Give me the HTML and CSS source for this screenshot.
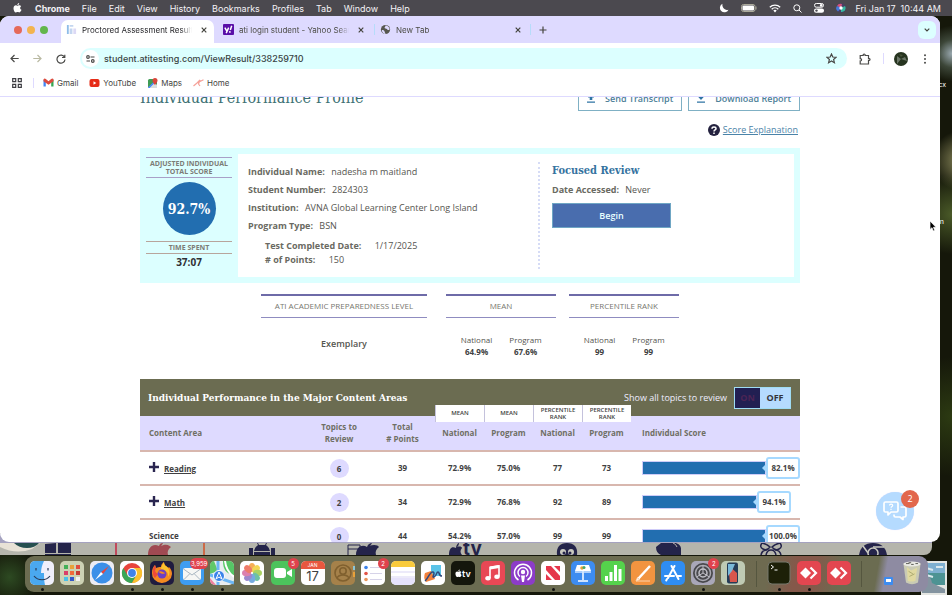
FILE: index.html
```html
<!DOCTYPE html>
<html lang="en">
<head>
    <meta charset="UTF-8">
    <meta name="viewport" content="width=device-width, initial-scale=1.0">
    <title>Proctored Assessment Results</title>
    <link rel="stylesheet" href="styles.css">
</head>
<body>
    <header class="menubar">
        <svg class="apple" viewBox="0 0 16 18"><path d="M11 0c.2 1.800-1.400 3.800-3.200 3.800C7.500 2 9.200.200 11 0zM8 5c.8 0 1.700-.9 3.400-.9 1.300 0 2.500.7 3.200 1.700-2.700 1.600-2.300 5.300.6 6.500C14.400 14.500 12.900 17 11.300 17c-1.200 0-1.600-.7-3.100-.7s-2 .7-3.100.7C2.900 17 .800 12.800.800 9.700.800 6.200 3 4.200 5.100 4.200 6.400 4.200 7.200 5 8 5z" fill="#fff"/></svg>
        <nav class="menus">
            <button class="app-name">Chrome</button>
            <button>File</button>
            <button>Edit</button>
            <button>View</button>
            <button>History</button>
            <button>Bookmarks</button>
            <button>Profiles</button>
            <button>Tab</button>
            <button>Window</button>
            <button>Help</button>
        </nav>
        <div class="status">
            <svg width="10" height="10" viewBox="0 0 10 10"><path d="M3.500.800a4.500 4.500 0 1 0 6 6A5 5 0 0 1 3.500.800z" fill="#fff"/></svg>
            <svg class="battery" width="16" height="8" viewBox="0 0 16 8"><rect x=".5" y=".5" width="13.500" height="7" rx="2" fill="none" stroke="#aaa99a"/><rect x="1.500" y="1.500" width="11.500" height="5" rx="1" fill="#fff"/><path d="M15 2.500v3" stroke="#aaa99a"/></svg>
            <svg width="12" height="9" viewBox="0 0 12 9"><g fill="none" stroke="#fff" stroke-width="1.300"><path d="M.8 3.200a7.400 7.400 0 0 1 10.400 0M2.700 5.200a4.700 4.700 0 0 1 6.600 0"/></g><path d="M4.300 6.600a2.500 2.500 0 0 1 3.400 0L6 8.500z" fill="#fff"/></svg>
            <svg width="9" height="9" viewBox="0 0 9 9"><g fill="none" stroke="#fff"><circle cx="3.800" cy="3.800" r="3"/><path d="M6 6l2.500 2.500"/></g></svg>
            <svg width="10" height="10" viewBox="0 0 10 10"><rect x=".5" y=".5" width="9" height="3.700" rx="1.800" fill="none" stroke="#fff"/><circle cx="7.200" cy="2.400" r="1.300" fill="#fff"/><rect y="5.500" width="10" height="4.300" rx="2.100" fill="#fff"/><circle cx="2.500" cy="7.600" r="1.200" fill="#4b494f"/></svg>
            <svg class="siri" width="10" height="10" viewBox="0 0 10 10"><circle cx="5" cy="5" r="4.700" fill="#4a3f66"/><path d="M5 5L1 3a4 4 0 0 1 5-2z" fill="#d5527c"/><path d="M5 5L2 8.500A4 4 0 0 1 1 3z" fill="#4679d8"/><path d="M5 5l4-2a4 4 0 0 1-4 6z" fill="#37b8a0"/><circle cx="5" cy="5" r="1.700" fill="#fff"/></svg>
            <span class="clock"><span>Fri Jan 17</span><span>10:44 AM</span></span>
        </div>
    </header>

    <main class="browser">
        <div class="tabstrip">
            <div class="lights"><i class="red"></i><i class="yellow"></i><i class="green"></i></div>
            <div class="tab active">
                <svg class="fav" viewBox="0 0 12 12"><path d="M1 1h2v10H1z" fill="#8fbde8"/><path d="M4 1h4v2H4zM4 5h3v6H4z" fill="#c4d6f0"/><path d="M8 5h3v6H8z" fill="#dcd9f5"/></svg>
                <span class="tab-title">Proctored Assessment Results</span>
                <button class="close" aria-label="Close tab"><svg viewBox="0 0 6 6"><path d="M.7.7l4.600 4.600M5.300.7L.7 5.300"/></svg></button>
            </div>
            <div class="tab">
                <svg class="fav" viewBox="0 0 12 12"><rect width="12" height="12" rx="1" fill="#5a0fa8"/><path d="M2 4l2 3.500M6.200 4L3.500 10" stroke="#fff" stroke-width="1.600" fill="none"/><path d="M9.500 2L8 6.500" stroke="#fff" stroke-width="1.600"/><circle cx="7.500" cy="8.600" r="1" fill="#fff"/></svg>
                <span class="tab-title">ati login student - Yahoo Search</span>
                <button class="close" aria-label="Close tab"><svg viewBox="0 0 6 6"><path d="M.7.7l4.600 4.600M5.300.7L.7 5.300"/></svg></button>
            </div>
            <div class="tab divided">
                <svg class="fav" viewBox="0 0 12 12"><circle cx="6" cy="6" r="5" fill="#57574f"/><path d="M2 6.500c2 0 3 .5 3 2 0 1 1 1 1 2.300C3.500 10.800 2 9 2 6.500zM6 1.500c0 1.500-1 1.500-1 2.500s2 .5 2.500 1.500S9 7 10.500 6C10.500 3.500 8.500 1.500 6 1.500z" fill="#dedaff"/></svg>
                <span class="tab-title">New Tab</span>
                <button class="close" aria-label="Close tab"><svg viewBox="0 0 6 6"><path d="M.7.7l4.600 4.600M5.300.7L.7 5.300"/></svg></button>
            </div>
            <button class="new-tab" aria-label="New tab"><svg width="8" height="8" viewBox="0 0 8 8"><path d="M4 .500v7M.500 4h7"/></svg></button>
            <button class="tab-search" aria-label="Search tabs"><svg width="6" height="4" viewBox="0 0 6 4"><path d="M.700.700L3 3 5.300.700"/></svg></button>
        </div>

        <div class="toolbar">
            <button aria-label="Back"><svg width="9" height="9" viewBox="0 0 9 9"><path d="M8.700 4.500H1M4.500 1L1 4.500 4.500 8"/></svg></button>
            <button class="dim" aria-label="Forward"><svg width="9" height="9" viewBox="0 0 9 9"><path d="M.300 4.500H8M4.500 1L8 4.500 4.500 8"/></svg></button>
            <button aria-label="Reload"><svg width="10" height="10" viewBox="0 0 10 10"><path d="M8.500 3.200A4 4 0 1 0 9 5.500M8.800.800v2.700H6"/></svg></button>
            <div class="omnibox">
                <span class="site-info"><svg width="9" height="8" viewBox="0 0 9 8"><circle cx="2" cy="2" r="1.300"/><path d="M4.500 2h4M.500 6H4"/><circle cx="6.800" cy="6" r="1.300"/></svg></span>
                <input type="text" aria-label="Address" value="student.atitesting.com/ViewResult/338259710">
                <button aria-label="Bookmark this page"><svg width="11" height="11" viewBox="0 0 11 11"><path d="M5.500 1l1.300 3 3.300.3-2.500 2.200.8 3.200-2.900-1.700-2.900 1.700.8-3.200L.9 4.300 4.200 4z"/></svg></button>
            </div>
            <button class="extensions" aria-label="Extensions"><svg width="12" height="12" viewBox="0 0 12 12"><path d="M1.200 2.500h3c-.4-2 2.300-2 1.900 0h3.400v3c2-.4 2 2.300 0 1.900V11H1.200V8c1.800.2 1.800-2.500 0-2.300z"/></svg></button>
            <span class="tool-sep"></span>
            <button class="avatar" aria-label="Profile"><svg width="14" height="14" viewBox="0 0 14 14"><circle cx="7" cy="7" r="7" fill="#26341f" stroke="none"/><path d="M3 4l4 3 4-2 2 4-6-2-4 5z" fill="#6b7668" stroke="none"/><path d="M5 2l4 1-2 2z" fill="#465239" stroke="none"/></svg></button>
            <button class="kebab" aria-label="Menu"><svg width="4" height="10" viewBox="0 0 4 10"><g fill="#4a4a48" stroke="none"><circle cx="2" cy="1.300" r="1"/><circle cx="2" cy="5" r="1"/><circle cx="2" cy="8.700" r="1"/></g></svg></button>
        </div>

        <nav class="bookmarks">
            <button aria-label="Apps"><svg width="10" height="10" viewBox="0 0 10 10"><g fill="none" stroke="#3d3d42" stroke-width="1.200"><path d="M.7.7h3v3h-3zM6.300.7h3v3h-3zM.7 6.300h3v3h-3zM6.300 6.300h3v3h-3z"/></g></svg></button>
            <a class="first" href="#"><svg width="11" height="9" viewBox="0 0 11 9"><path d="M.5 1.500V8.500H2.800V4z" fill="#4285f4"/><path d="M10.500 1.500V8.500H8.200V4z" fill="#34a853"/><path d="M.5 1.500v1.700l5 3.600 5-3.600V1.200C10 .200 9 .200 8.200 1L5.500 3.200 2.800 1C2 .2 1 .3.500 1.500z" fill="#dd4b3e"/></svg>Gmail</a>
            <a href="#"><svg width="11" height="8" viewBox="0 0 11 8"><rect x=".5" width="10" height="8" rx="2" fill="#e62c17"/><path d="M4.500 2.300v3.400L7.300 4z" fill="#fff"/></svg>YouTube</a>
            <a href="#"><svg width="11" height="10" viewBox="0 0 11 10"><rect x="1" y="1" width="9" height="9" rx="1.500" fill="#3f9b54"/><path d="M1 9.500L7 4l3 3v3H1z" fill="#d9dede"/><path d="M1.500 10L8 3.500" stroke="#4285f4" stroke-width="1.500"/><path d="M8 0a2.500 2.500 0 0 1 2.500 2.500C10.500 4.500 8 7 8 7S5.500 4.500 5.500 2.500A2.500 2.500 0 0 1 8 0z" fill="#d9463a"/></svg>Maps</a>
            <a href="#"><svg width="11" height="8" viewBox="0 0 11 8"><path d="M.5 7L4 4l3-3-1.500 4 1.500 2M5 3.500L10.500.8" fill="none" stroke="#f5a199" stroke-width="1.200"/></svg>Home</a>
        </nav>

        <section class="page">
            <div class="report">
                <div class="page-head">
                    <h1>Individual Performance Profile</h1>
                    <button class="outline"><svg width="8" height="9" viewBox="0 0 8 9"><path d="M2.700 6V3.500H.8L4 0l3.200 3.500H5.300V6zM0 7.500h8v1.200H0z"/></svg>Send Transcript</button>
                    <button class="outline"><svg width="8" height="9" viewBox="0 0 8 9"><path d="M2.700 0v2.500H.8L4 6l3.200-3.500H5.300V0zM0 7.500h8v1.200H0z"/></svg>Download Report</button>
                </div>
                <div class="explain">
                    <svg width="12" height="12" viewBox="0 0 12 12"><circle cx="6" cy="6" r="6" fill="#24223f"/><path d="M4 4.700C4 2.400 8 2.400 8 4.700 8 6 6 6 6 7.500M6 8.500V10" stroke="#fff" stroke-width="1.500" fill="none"/></svg>
                    <a href="#">Score Explanation</a>
                </div>

                <div class="summary">
                    <div class="score">
                        <h2>Adjusted Individual<br>Total Score</h2>
                        <div class="circle">92.7%</div>
                        <h2 class="warm">Time Spent</h2>
                        <strong>37:07</strong>
                    </div>
                    <div class="details">
                        <div class="person">
                            <p><b>Individual Name:</b> nadesha m maitland</p>
                            <p><b>Student Number:</b> 2824303</p>
                            <p><b>Institution:</b> AVNA Global Learning Center Long Island</p>
                            <p><b>Program Type:</b> BSN</p>
                            <div class="sub">
                                <p><b>Test Completed Date:</b> 1/17/2025</p>
                                <p><b># of Points:</b> 150</p>
                            </div>
                        </div>
                        <div class="review">
                            <h3>Focused Review</h3>
                            <p><b>Date Accessed:</b> Never</p>
                            <button class="begin">Begin</button>
                        </div>
                    </div>
                </div>

                <div class="levels">
                    <div class="level wide">
                        <h4>ATI ACADEMIC PREPAREDNESS LEVEL</h4>
                        <p class="grade">Exemplary</p>
                    </div>
                    <div class="level">
                        <h4>MEAN</h4>
                        <div class="pair"><p>National<b>64.9%</b></p><p>Program<b>67.6%</b></p></div>
                    </div>
                    <div class="level rank">
                        <h4>PERCENTILE RANK</h4>
                        <div class="pair"><p>National<b>99</b></p><p>Program<b>99</b></p></div>
                    </div>
                </div>

                <div class="areas-head">
                    <h2>Individual Performance in the Major Content Areas</h2>
                    <span class="toggle-label" id="topics-label">Show all topics to review</span>
                    <div class="toggle" role="group" aria-labelledby="topics-label">
                        <button class="on">ON</button><button class="off">OFF</button>
                    </div>
                </div>
                <table class="areas">
                    <colgroup>
                        <col><col class="c-topics"><col class="c-total"><col class="c-num"><col class="c-num"><col class="c-num"><col class="c-num"><col class="c-score">
                    </colgroup>
                    <thead>
                        <tr>
                            <th class="name">Content Area</th>
                            <th>Topics to<br>Review</th>
                            <th>Total<br># Points</th>
                            <th><span class="flag">MEAN</span>National</th>
                            <th><span class="flag">MEAN</span>Program</th>
                            <th><span class="flag">PERCENTILE<br>RANK</span>National</th>
                            <th><span class="flag">PERCENTILE<br>RANK</span>Program</th>
                            <th class="score-col">Individual Score</th>
                        </tr>
                    </thead>
                    <tbody>
                        <tr>
                            <td class="name"><button class="plus" aria-label="Expand Reading"><svg width="10" height="10" viewBox="0 0 10 10"><path d="M3.800 0h2.400v3.800H10v2.400H6.200V10H3.800V6.200H0V3.800h3.800z"/></svg></button><a href="#">Reading</a></td>
                            <td><span class="bubble">6</span></td>
                            <td>39</td>
                            <td>72.9%</td>
                            <td>75.0%</td>
                            <td>77</td>
                            <td>73</td>
                            <td class="score-col"><div class="bar-row"><span class="bar"></span><span class="bar-value">82.1%</span></div></td>
                        </tr>
                        <tr>
                            <td class="name"><button class="plus" aria-label="Expand Math"><svg width="10" height="10" viewBox="0 0 10 10"><path d="M3.800 0h2.400v3.800H10v2.400H6.200V10H3.800V6.200H0V3.800h3.800z"/></svg></button><a href="#">Math</a></td>
                            <td><span class="bubble">2</span></td>
                            <td>34</td>
                            <td>72.9%</td>
                            <td>76.8%</td>
                            <td>92</td>
                            <td>89</td>
                            <td class="score-col"><div class="bar-row short"><span class="bar"></span><span class="bar-value">94.1%</span></div></td>
                        </tr>
                        <tr>
                            <td class="name">Science</td>
                            <td><span class="bubble">0</span></td>
                            <td>44</td>
                            <td>54.2%</td>
                            <td>57.0%</td>
                            <td>99</td>
                            <td>99</td>
                            <td class="score-col"><div class="bar-row"><span class="bar"></span><span class="bar-value">100.0%</span></div></td>
                        </tr>
                    </tbody>
                </table>
            </div>
            <button class="chat" aria-label="Chat">
                <svg width="24" height="20" viewBox="0 0 24 20"><g fill="none" stroke="#fff" stroke-width="1.700" stroke-linejoin="round"><path d="M2.500 1h11Q15 1 15 2.500v7Q15 11 13.500 11H8l-3 3v-3H2.500Q1 11 1 9.500v-7Q1 1 2.500 1z"/><path d="M17.500 6h4Q23 6 23 7.500v7q0 1.500-1.500 1.500H20v2.500L17 16h-4.500Q11 16 11 14.500v-1"/><path d="M6.500 4.500c0-1.800 3.200-1.800 3.200 0 0 1-1.600 1-1.600 2.300M8 7.800V9" stroke-width="1.200"/></g></svg>
                <span class="count">2</span>
            </button>
        </section>
    </main>

    <!-- window sitting behind the browser -->
    <div class="behind">
        <svg class="orb" width="40" height="12" viewBox="0 0 40 12"><path d="M0 0h40L32 6Q16 12 0 4z" fill="#e8e2d6"/><path d="M14 0h25q-4 5-12 5T14 0z" fill="#264f50"/></svg>
        <span class="cell"><svg width="26" height="12" viewBox="0 0 26 12"><path d="M0 1l11-1v10H0zM13 0h13v10H13zM0 11h26v1H0z"/></svg></span>
        <span class="cell ruled"><svg width="24" height="12" viewBox="0 0 24 12"><path d="M0 12C0 4 5 0 11 3c1-3 3-3 4-3-1 2-2 3-2 3 6-3 9 0 10 1-3 2-4 5-3 8z" fill="#a04a52"/></svg></span>
        <span class="cell"><svg width="26" height="12" viewBox="0 0 26 12"><path d="M5 8C6 4 8 3 9 2L8 0h1l1 2h6l1-2h1l-1 2c1 1 3 2 4 6zM5 9h16v3H5zM0 5h4v7H0zM22 5h4v7h-4z"/></svg></span>
        <span class="cell"><svg width="34" height="12" viewBox="0 0 34 12"><path d="M1 2h12M1 2v10M1 6h10M13 2v4" fill="none" stroke="#24244a"/><path d="M9 12c0-8 6-11 11-8 1-3 3-4 5-4-1 2-2 3-3 3 5-2 9-1 10 1-3 2-4 5-3 8z"/></svg></span>
        <span class="cell tv"><svg width="14" height="12" viewBox="0 0 14 12"><path d="M0 12C0 5 3 3 7 5c0-3 2-5 3-5 0 2-1 3-2 4 3-1 5 0 5 1-2 2-2 5 0 7z"/></svg>tv</span>
        <span class="cell"><svg width="22" height="12" viewBox="0 0 22 12"><path d="M1 12C0 4 4 0 11 0s11 4 10 12z"/><circle cx="7" cy="9" r="3" fill="#c9c9c0"/><circle cx="15" cy="9" r="3" fill="#c9c9c0"/><circle cx="8" cy="10" r="1.500"/><circle cx="14" cy="10" r="1.500"/></svg></span>
        <span class="cell"><svg width="26" height="12" viewBox="0 0 26 12"><path d="M0 4l5-4h15q6 2 5 8v4H5Q0 10 0 4z"/><path d="M17 0q3 1 4 4" stroke="#b5b5ac" fill="none"/></svg></span>
        <span class="cell"><svg width="22" height="12" viewBox="0 0 22 12"><g fill="none" stroke="#24244a" stroke-width="1.500"><path d="M2 0q5 1 8 4Q7 8 3 6T2 0zM20 0q-5 1-8 4 3 4 7 2t1-6zM1 12q1-5 6-5M21 12q-1-5-6-5M6 12q1-5 5-5t5 5"/></g></svg></span>
        <span class="cell"><svg width="28" height="12" viewBox="0 0 28 12"><path d="M0 12Q2 0 14 0t14 12z"/><circle cx="14" cy="10" r="5" fill="none" stroke="#c9c9c0" stroke-width="1.500"/><path d="M14 4h11M9 10L4 3" stroke="#c9c9c0" stroke-width="1.500"/></svg></span>
    </div>

    <footer class="dock">
        <span class="app running"><svg viewBox="0 0 24 24"><rect width="24" height="24" rx="5" fill="#f0effb"/><path d="M5 0h9c-2 4-3 8-3 12h3c0 4 0 8 1 12H5a5 5 0 0 1-5-5V5a5 5 0 0 1 5-5z" fill="#4aa8f0"/><g fill="none" stroke="#2a3a55" stroke-width="1.200"><path d="M6 7v2.500M18 7v2.500M4 15c4 5 12 5 16 0"/></g></svg></span>
        <span class="app"><svg viewBox="0 0 24 24"><rect width="24" height="24" rx="5" fill="#cdd2b4"/><g><path d="M4 4h4v4H4z" fill="#44b058"/><path d="M10 4h4v4h-4z" fill="#e8a13a"/><path d="M16 4h4v4h-4z" fill="#e04c40"/><path d="M4 10h4v4H4z" fill="#d93f6a"/><path d="M10 10h4v4h-4z" fill="#f06a3a"/><path d="M16 10h4v4h-4z" fill="#c63b33"/><path d="M4 16h4v4H4z" fill="#4ac0e8"/><path d="M10 16h4v4h-4z" fill="#3458c8"/><path d="M16 16h4v4h-4z" fill="#f4f4f4"/></g></svg></span>
        <span class="app"><svg viewBox="0 0 24 24"><rect width="24" height="24" rx="5" fill="#ececf4"/><circle cx="12" cy="12" r="10.500" fill="#3b8fe8"/><path d="M19 5l-6 8-2-2z" fill="#e8453c"/><path d="M5 19l6-8 2 2z" fill="#fff"/></svg></span>
        <span class="app running"><svg viewBox="0 0 24 24"><rect width="24" height="24" rx="5" fill="#fff"/><circle cx="12" cy="12" r="10" fill="#e8453c"/><path d="M3.300 7A10 10 0 0 0 12 22l4.300-7.500H7.700z" fill="#3aa757"/><path d="M20.700 7A10 10 0 0 1 12 22l4.300-7.500L12 7z" fill="#f9c12e"/><circle cx="12" cy="12" r="5" fill="#fff"/><circle cx="12" cy="12" r="3.900" fill="#3f83ea"/></svg></span>
        <span class="app running"><svg viewBox="0 0 24 24"><rect width="24" height="24" rx="5" fill="#1f1b3f"/><path d="M2 12C2 8 3 6 5 4l1 3c2-1 3-1 5-1 0-3 2-4 3-5 0 4 3 4 4 6l1-1c2 2 3 4 3 7a10 9.500 0 0 1-20-1z" fill="#f48a22"/><path d="M5 4l1 3c-2 3 0 5 2 6l-3 4C2 14 2 8 5 4z" fill="#ef4a3a"/><path d="M14 1c0 4 3 4 4 6 2 3 2 6 0 9 1-5-3-7-7-8 0-3 2-5 3-7z" fill="#fbc02d"/><circle cx="12" cy="13" r="4.500" fill="#6b3fc4"/><path d="M8 11c3-2 5 0 7 1-2 2-4 0-7-1z" fill="#f48a22"/></svg></span>
        <span class="app running"><svg viewBox="0 0 24 24"><rect width="24" height="24" rx="5" fill="#3e9df2"/><rect x="3" y="7" width="18" height="12" rx="2" fill="#f6f6f4"/><path d="M3.500 8l8.500 6 8.500-6M4 18.500l6-6M20 18.500l-6-6" fill="none" stroke="#a9b6c2"/></svg><span class="badge wide-badge">3,959</span></span>
        <span class="app running"><svg viewBox="0 0 24 24"><rect width="24" height="24" rx="5" fill="#e9edf0"/><path d="M13 0h6a5 5 0 0 1 5 5v9C16 13 13 8 13 0z" fill="#56c766"/><path d="M0 5a5 5 0 0 1 4-5l4 10-8 3z" fill="#60c86a"/><path d="M8 0v24M0 14l24 8" stroke="#6bb6f5" stroke-width="3"/><path d="M15 0q1 10 9 16" fill="none" stroke="#fff" stroke-width="2"/><path d="M0 17l6 7H5a5 5 0 0 1-5-5z" fill="#ef7e9e"/><circle cx="9" cy="15" r="5.500" fill="#3a83ea" stroke="#fff"/><path d="M9 11l3 7-3-2-3 2z" fill="none" stroke="#fff"/></svg></span>
        <span class="app"><svg viewBox="0 0 24 24"><rect width="24" height="24" rx="5" fill="#fff"/><g opacity=".85"><ellipse cx="12" cy="6.500" rx="3.200" ry="4.500" fill="#f5a13a"/><ellipse cx="12" cy="6.500" rx="3.200" ry="4.500" fill="#f1cf38" transform="rotate(45 12 12)"/><ellipse cx="12" cy="6.500" rx="3.200" ry="4.500" fill="#9ccb4a" transform="rotate(90 12 12)"/><ellipse cx="12" cy="6.500" rx="3.200" ry="4.500" fill="#55b894" transform="rotate(135 12 12)"/><ellipse cx="12" cy="6.500" rx="3.200" ry="4.500" fill="#5f9ddb" transform="rotate(180 12 12)"/><ellipse cx="12" cy="6.500" rx="3.200" ry="4.500" fill="#8c74c4" transform="rotate(225 12 12)"/><ellipse cx="12" cy="6.500" rx="3.200" ry="4.500" fill="#d66aa0" transform="rotate(270 12 12)"/><ellipse cx="12" cy="6.500" rx="3.200" ry="4.500" fill="#ec6450" transform="rotate(315 12 12)"/></g></svg></span>
        <span class="app"><svg viewBox="0 0 24 24"><rect width="24" height="24" rx="5" fill="#4cc35c"/><rect x="3" y="7" width="12" height="10" rx="3" fill="#fff"/><path d="M16 11l5-3v8l-5-3z" fill="#fff"/></svg><span class="badge">5</span></span>
        <span class="app calendar"><span>JAN</span><b>17</b></span>
        <span class="app"><svg viewBox="0 0 24 24"><rect width="24" height="24" rx="5" fill="#a5814a"/><path d="M23 5v4" stroke="#8cc6d8" stroke-width="2"/><path d="M23 11v5" stroke="#e8a13a" stroke-width="2"/><g fill="none" stroke="#80602f" stroke-width="1.600"><circle cx="12" cy="12" r="8"/><circle cx="12" cy="10" r="3.200"/><path d="M6 17c2-4 10-4 12 0"/></g></svg></span>
        <span class="app"><svg viewBox="0 0 24 24"><rect width="24" height="24" rx="5" fill="#fff"/><circle cx="5" cy="6.500" r="1.800" fill="#3b83ea"/><circle cx="5" cy="12.500" r="1.800" fill="#e25548"/><circle cx="5" cy="18.500" r="1.800" fill="#e8955a"/><path d="M9 6.500h12M9 12.500h12M9 18.500h12" stroke="#d6d3e8"/></svg><span class="badge">2</span></span>
        <span class="app"><svg viewBox="0 0 24 24"><rect width="24" height="24" rx="5" fill="#fff"/><path d="M0 6V5a5 5 0 0 1 5-5h14a5 5 0 0 1 5 5v1z" fill="#f9cb3c"/><path d="M0 11h24M0 16h24" stroke="#d9d5f4"/><path d="M0 17h24v2a5 5 0 0 1-5 5H5a5 5 0 0 1-5-5z" fill="#e6e2fb"/></svg></span>
        <span class="app"><svg viewBox="0 0 24 24"><rect width="24" height="24" rx="5" fill="#fff"/><path d="M10 4h10v11H10z" fill="#5bc4e8"/><path d="M4 12l6-2 4 8-9 3q-3-4-1-9z" fill="#f2823c"/><path d="M4 20c3-2 5-10 8-9s-2 6 1 5 2-5 4-5 0 4 4 4" fill="none" stroke="#30497c" stroke-width="1.500"/></svg></span>
        <span class="app tv-app"><svg viewBox="0 0 16 18"><path d="M11 0c0 2-1.400 3.800-3.200 3.800C7.500 2 9 0 11 0zM8 5c.8 0 1.700-.9 3.400-.9 1.300 0 2.500.7 3.200 1.700-2.700 1.600-2.300 5.300.6 6.500C14 14.500 13 17 11.300 17c-1.200 0-1.600-.7-3.100-.7s-2 .7-3.100.7C3 17 1 13 1 9.700 1 6 3 4.200 5.100 4.200 6.400 4.200 7.200 5 8 5z" fill="#fff"/></svg>tv</span>
        <span class="app"><svg viewBox="0 0 24 24"><rect width="24" height="24" rx="5" fill="#e84855"/><path d="M9 17V6.500L18 5v10.500" fill="none" stroke="#fff" stroke-width="1.600"/><path d="M9 7l9-1.500" stroke="#fff" stroke-width="3"/><ellipse cx="7" cy="17.300" rx="2.700" ry="2.200" fill="#fff"/><ellipse cx="16" cy="15.800" rx="2.700" ry="2.200" fill="#fff"/></svg></span>
        <span class="app"><svg viewBox="0 0 24 24"><rect width="24" height="24" rx="5" fill="#8c3cc8"/><g fill="none" stroke="#fff" stroke-width="1.500"><path d="M7.500 19A8.500 8.500 0 1 1 16.500 19"/><path d="M9 15.500a5 5 0 1 1 6 0"/></g><circle cx="12" cy="11" r="2.200" fill="#fff"/><path d="M10 14.500h4l-1 6.500h-2z" fill="#fff"/></svg></span>
        <span class="app running"><svg viewBox="0 0 24 24"><rect width="24" height="24" rx="5" fill="#fff"/><path d="M5 5h5l9 10v4h-5L5 9z" fill="#e5364b"/><path d="M13 5h6v6z" fill="#e5364b"/><path d="M5 13v6h6z" fill="#e5364b"/></svg></span>
        <span class="app"><svg viewBox="0 0 24 24"><rect width="24" height="24" rx="5" fill="#3d8cf0"/><path d="M6 4h12l2 6H4z" fill="#fff"/><path d="M12 10v9M7 20h10" stroke="#fff" stroke-width="1.500"/><path d="M4 11h16" stroke="#cfe4ff" stroke-width="1.500"/><circle cx="11" cy="7" r="1.800" fill="#e8a13a"/><circle cx="13" cy="6.500" r="1.500" fill="#43a86a"/></svg></span>
        <span class="app"><svg viewBox="0 0 24 24"><rect width="24" height="24" rx="5" fill="#55d24c"/><path d="M4 15h3v5H4zM8.500 11h3v9h-3zM13 4h3v16h-3zM17.500 8h3v12h-3z" fill="#fff"/></svg></span>
        <span class="app"><svg viewBox="0 0 24 24"><rect width="24" height="24" rx="5" fill="#f29440"/><path d="M19 5L7 18" stroke="#fff" stroke-width="2.500"/><path d="M5 20l1.500-3.500 2 2zM5 20h14" stroke="#fbd3ad" fill="#fff"/></svg></span>
        <span class="app"><svg viewBox="0 0 24 24"><rect width="24" height="24" rx="5" fill="#2f8df2"/><path d="M13.500 5L7 17M10.500 5L17.500 18M4 15h9M16.500 15H20M6 18l-.8 1.400" fill="none" stroke="#fff" stroke-width="2" stroke-linecap="round"/></svg></span>
        <span class="app running"><svg viewBox="0 0 24 24"><rect width="24" height="24" rx="5" fill="#a9a7b8"/><circle cx="12" cy="12" r="10" fill="#48484c"/><circle cx="12" cy="12" r="7.500" fill="none" stroke="#aaa9b2" stroke-width="1.500"/><circle cx="12" cy="12" r="4" fill="none" stroke="#c2c1c8" stroke-width="1.500"/><path d="M12 12V4.500M12 12l6.500 4M12 12l-6.500 4" stroke="#c2c1c8"/></svg><span class="badge">2</span></span>
        <span class="app"><svg viewBox="0 0 24 24"><rect width="24" height="24" rx="5" fill="#bfcab4"/><rect x="6" y="1.500" width="11" height="21" rx="2" fill="#243b56"/><path d="M7 4l9 8v9H9z" fill="#d8564c"/><path d="M7 3h7l-3 7-4 5z" fill="#79b8d8"/></svg></span>
        <i class="dock-sep"></i>
        <span class="app running"><svg viewBox="0 0 24 24"><rect x="1" y="1" width="22" height="22" rx="4" fill="#1d2008" stroke="#77786c"/><path d="M4 4l2.500 2L4 8M7.500 9h3" fill="none" stroke="#fff"/></svg></span>
        <span class="app running"><svg viewBox="0 0 24 24"><rect width="24" height="24" rx="5" fill="#e34650"/><path d="M8.500 6.500L14 12l-5.500 5.500L3 12z" fill="#fff"/><path d="M13.500 6.500L19 12l-5.500 5.500" fill="none" stroke="#fff" stroke-width="2.200"/></svg></span>
        <span class="app"><svg viewBox="0 0 24 24"><rect width="24" height="24" rx="5" fill="#e34650"/><path d="M8.500 6.500L14 12l-5.500 5.500L3 12z" fill="#fff"/><path d="M13.500 6.500L19 12l-5.500 5.500" fill="none" stroke="#fff" stroke-width="2.200"/></svg></span>
        <i class="dock-sep"></i>
        <span class="app minimized"><svg viewBox="0 0 22 24"><rect x="12" y="16" width="9" height="8" rx="1" fill="#3d8cf0"/><rect x="14" y="18" width="5" height="3" fill="#fff"/></svg></span>
        <span class="app"><svg viewBox="0 0 24 28"><path d="M2 3h20l-3 22q-7 4-14 0z" fill="#c9cab4"/><path d="M6 7l5 4 7-3-2 15q-5 2-9 0z" fill="#e0d9a0"/><path d="M8 12l5 3M9 18l6-3" stroke="#a5a468"/><ellipse cx="12" cy="3.500" rx="10" ry="3" fill="#e9e9e4"/><path d="M5 3h4M11 4h3M16 3h3M8 2h3" stroke="#4a4a44"/></svg></span>
    </footer>

    <!-- things lying on the desktop -->
    <span class="desk-label upper">cx</span>
    <span class="desk-label lower">n</span>
    <svg class="desk-photo" width="26" height="34" viewBox="0 0 26 34"><path d="M0 0h26v34H0z" fill="#e4e6e2"/><path d="M1 2h23v12H1z" fill="#7fb0d0"/><path d="M1 12h23v12H1z" fill="#4d9393"/><path d="M1 16q8-4 10 6l13 6v4H1z" fill="#8494a0"/><path d="M2 13l10 3M5 7l7 2M15 6h7" stroke="#dbe8ec" stroke-width="2"/></svg>
    <svg class="cursor" width="8" height="12" viewBox="0 0 8 12"><path d="M1 1v8.500l2-1.800L4.200 11l1.500-.7-1.300-3H7z" fill="#000" stroke="#fff" stroke-width=".7"/></svg>
</body>
</html>
```
FILE: styles.css
```css
/* Base */
* {
    margin: 0;
    padding: 0;
    box-sizing: border-box;
}
body {
    display: flex;
    flex-direction: column;
    height: 100vh;
    overflow: hidden;
    position: relative;
    font-family: 'Inter', 'Liberation Sans', sans-serif;
    font-size: 9px;
    color: #3f3f42;
    background:
        radial-gradient(circle at 100% 9%, #9aa9b0 0, #3c4638 14px, transparent 28px),
        radial-gradient(circle at 100% 36%, #4a5a28 0, transparent 40px),
        radial-gradient(circle at 101% 27%, #8c8a5c 0, transparent 30px),
        radial-gradient(circle at 100% 70%, #2c3a12 0, transparent 60px),
        radial-gradient(circle at 1% 97%, #2d4a22 0, transparent 30px),
        #15170a;
}
button {
    border: 0;
    background: none;
    font: inherit;
    color: inherit;
}
svg {
    display: block;
    flex: none;
}

/* Menu bar */
.menubar {
    display: flex;
    align-items: center;
    height: 16px;
    flex: none;
    padding: 0 11px 0 13px;
    background: #4b494f;
    color: #f4f2f6;
}
.apple {
    width: 9px;
    height: 10px;
}
.menus {
    display: flex;
    gap: 12px;
    margin-left: 13px;
}
.menus .app-name {
    font-weight: 700;
}
.status {
    display: flex;
    align-items: center;
    gap: 12px;
    margin-left: auto;
}
.clock {
    display: flex;
    gap: 5px;
    white-space: nowrap;
    margin-left: -3px;
}

/* Browser window */
.browser {
    display: flex;
    flex-direction: column;
    flex: 1;
    min-height: 0;
    margin-right: 12px;
    background: #fff;
    border-radius: 9px;
    overflow: hidden;
    z-index: 1;
}
.tabstrip {
    display: flex;
    align-items: center;
    height: 27px;
    flex: none;
    padding: 0 4px 0 14px;
    background: #dedaff;
}
.lights {
    display: flex;
    gap: 5px;
    width: 47px;
}
.lights i {
    width: 8px;
    height: 8px;
    border-radius: 50%;
}
.red {
    background: #e5695a;
}
.yellow {
    background: #f3b450;
}
.green {
    background: #62b64c;
}
.tab {
    display: flex;
    align-items: center;
    gap: 5px;
    width: 157px;
    height: 23px;
    margin-top: 4px;
    padding: 0 8px 4px;
    font-size: 8px;
    color: #4c4c46;
}
.tab.active {
    width: 153px;
    padding: 0 7px 4px 5px;
    margin-right: 1px;
    background: #fff;
    border-radius: 7px 7px 0 0;
    color: #26262a;
}
.tab.divided {
    position: relative;
}
.tab.divided::before,
.tab.divided::after {
    content: '';
    position: absolute;
    left: 2px;
    top: 4px;
    width: 1px;
    height: 11px;
    background: #b6dcfa;
}
.tab.divided::after {
    left: auto;
    right: -2px;
}
.fav {
    width: 11px;
    height: 11px;
}
.tab-title {
    flex: 1;
    overflow: hidden;
    white-space: nowrap;
    -webkit-mask-image: linear-gradient(to right, #000 90%, transparent);
    mask-image: linear-gradient(to right, #000 90%, transparent);
}
.close {
    width: 6px;
    margin-left: 4px;
}
.close svg,
.new-tab svg,
.tab-search svg {
    fill: none;
    stroke: #45453f;
    stroke-width: 1.2;
}
.new-tab {
    margin-left: 10px;
}
.tab-search {
    display: grid;
    place-items: center;
    width: 18px;
    height: 18px;
    margin-left: auto;
    border-radius: 6px;
    background: #dcffff;
}
.toolbar {
    display: flex;
    align-items: center;
    height: 31px;
    flex: none;
    padding: 0 13px 0 10px;
}
.toolbar > button {
    margin-right: 14px;
}
.toolbar svg {
    fill: none;
    stroke: #4a4a48;
    stroke-width: 1.2;
}
.toolbar .dim svg {
    stroke: #b9b9a2;
}
.omnibox {
    display: flex;
    align-items: center;
    flex: 1;
    height: 21px;
    padding: 0 10px 0 2px;
    background: #dcffff;
    border-radius: 11px;
}
.site-info {
    display: grid;
    place-items: center;
    width: 17px;
    height: 17px;
    border-radius: 50%;
    background: #fff;
}
.omnibox input {
    flex: 1;
    margin-left: 5px;
    border: 0;
    background: none;
    font: inherit;
    font-weight: 500;
    color: #3a4444;
}
.toolbar .extensions {
    margin: 0 12px;
}
.tool-sep {
    width: 1px;
    height: 11px;
    background: #dedaff;
}
.toolbar .avatar {
    margin: 0 15px 0 10px;
}
.toolbar .kebab {
    margin: 0;
}
.bookmarks {
    display: flex;
    align-items: center;
    gap: 11px;
    height: 23px;
    flex: none;
    padding: 0 12px 5px;
    border-bottom: 1px solid #dedaff;
    font-size: 8px;
}
.bookmarks a {
    display: flex;
    align-items: center;
    gap: 3px;
    color: #45453f;
    text-decoration: none;
}
.bookmarks .first {
    padding-left: 9px;
    border-left: 1px solid #dedaff;
}

/* Report */
.page {
    position: relative;
    flex: 1;
    min-height: 0;
    overflow: hidden;
    font-family: 'Open Sans', 'Noto Sans', sans-serif;
    color: #55554f;
}
.report {
    max-width: 660px;
    margin: -11px auto 0;
}
.report h1,
.areas-head h2,
.review h3,
.circle {
    font-family: 'DejaVu Serif Condensed', 'DejaVu Serif', serif;
}
.page-head {
    display: flex;
    gap: 6px;
}
.page-head h1 {
    flex: 1;
    font-size: 16px;
    font-weight: 400;
    line-height: 24px;
    white-space: nowrap;
    color: #3d7174;
}
.outline {
    display: flex;
    align-items: center;
    gap: 10px;
    height: 25px;
    padding: 0 8px;
    border: 1px solid #7fb0c4;
    font-size: 9px;
    font-weight: 600;
    color: #4d8098;
}
.outline svg {
    fill: #2f74a4;
}
.explain {
    display: flex;
    justify-content: flex-end;
    align-items: center;
    gap: 3px;
    height: 37px;
    padding-right: 2px;
    font-size: 9px;
}
.explain a {
    color: #4a83a8;
}
.summary {
    display: flex;
    padding: 6px;
    background: #dcffff;
}
.score {
    display: flex;
    flex-direction: column;
    align-items: center;
    width: 86px;
    margin-right: 6px;
    padding-top: 3px;
}
.score h2 {
    width: 100%;
    padding: 2px 0 1px;
    border-top: 1px solid #a9a0c8;
    border-bottom: 1px solid #a9a0c8;
    font-size: 7px;
    font-weight: 700;
    line-height: 8px;
    text-align: center;
    text-transform: uppercase;
    white-space: nowrap;
    color: #7c7c76;
}
.score .warm {
    border-color: #b8a59c;
}
.circle {
    display: grid;
    place-items: center;
    width: 53px;
    height: 53px;
    margin: 4px 0 6px;
    border-radius: 50%;
    background: #226eb0;
    color: #fff;
    font-size: 14px;
    font-weight: 700;
}
.score strong {
    font-size: 10px;
    line-height: 16px;
    color: #303034;
}
.details {
    display: flex;
    flex: 1;
    padding: 8px 10px;
    background: #fff;
    font-size: 9px;
    line-height: 18px;
}
.details b {
    font-weight: 700;
    margin-right: 4px;
    color: #6a6a62;
}
.person {
    width: 292px;
    height: 107px;
    padding-top: 1px;
    border-right: 2px dotted #d6dcf6;
}
.sub {
    margin-top: 4px;
    padding-left: 17px;
    line-height: 14px;
}
.sub b {
    margin-right: 11px;
}
.review {
    padding-left: 12px;
}
.review h3 {
    font-size: 11px;
    line-height: 18px;
    color: #3573a0;
}
.review p {
    line-height: 20px;
}
.begin {
    display: block;
    width: 119px;
    height: 25px;
    margin-top: 3px;
    border: 1px solid #6fa6c4;
    background: #496dae;
    color: #e8ffff;
    font-weight: 600;
}

/* Preparedness levels */
.levels {
    display: flex;
    justify-content: center;
    gap: 19px;
    margin-top: 11px;
    height: 85px;
}
.level {
    width: 110px;
    text-align: center;
}
.level.wide {
    width: 166px;
}
.level.rank {
    margin-left: -6px;
}
.level h4 {
    height: 24px;
    border-top: 2px solid #6e6ba8;
    border-bottom: 1px solid #8f8cc0;
    font-size: 8px;
    font-weight: 400;
    line-height: 20px;
    color: #77776f;
}
.grade {
    margin-top: 16px;
    font-size: 9px;
    font-weight: 600;
    line-height: 20px;
}
.pair {
    display: flex;
    justify-content: center;
    margin-top: 16px;
    font-size: 8px;
    line-height: 12px;
}
.pair p {
    width: 49px;
}
.pair b {
    display: block;
    color: #3f3f42;
}

/* Content areas */
.areas-head {
    display: flex;
    align-items: center;
    height: 37px;
    padding: 0 9px 0 8px;
    background: #6b6c51;
    color: #eeecff;
}
.areas-head h2 {
    flex: 1;
    font-size: 10px;
    color: #fff;
    white-space: nowrap;
}
.toggle-label {
    font-size: 9px;
}
.toggle {
    display: flex;
    margin-left: 7px;
    border: 1px solid #9fdcf4;
    font-size: 9px;
    font-weight: 700;
    line-height: 20px;
}
.on {
    width: 25px;
    background: #211f52;
    color: #4c2455;
}
.off {
    width: 30px;
    background: #b5dbff;
    color: #34343a;
}
.areas {
    width: 100%;
    table-layout: fixed;
    border-collapse: collapse;
    font-size: 8px;
    line-height: 12px;
    color: #3f3f42;
}
.c-topics {
    width: 62px;
}
.c-total {
    width: 65px;
}
.c-num {
    width: 49px;
}
.c-score {
    width: 169px;
}
.areas th {
    position: relative;
    height: 35px;
    background: #dedaff;
    border-bottom: 2px solid #d8b7ae;
    font-weight: 700;
    color: #6f6f64;
}
.flag {
    position: absolute;
    left: 0;
    right: 0;
    top: -11px;
    display: grid;
    place-items: center;
    height: 17px;
    border-left: 1px solid #c4c2dc;
    background: #fff;
    font-size: 6px;
    font-weight: 600;
    line-height: 7px;
    color: #3f3f42;
}
.areas td {
    height: 34px;
    border-bottom: 2px solid #d8b7ae;
    text-align: center;
    font-weight: 700;
}
.areas .name {
    padding-left: 9px;
    text-align: left;
}
.areas .name a {
    color: inherit;
}
.plus {
    display: inline-block;
    margin-right: 5px;
}
.plus svg {
    fill: #2a2550;
}
.bubble {
    display: inline-block;
    width: 19px;
    height: 19px;
    line-height: 19px;
    border-radius: 50%;
    background: #dedaff;
}
.areas .score-col {
    padding-left: 11px;
    text-align: left;
}
.bar-row {
    display: flex;
    align-items: center;
}
.bar-row.short {
    padding-right: 9px;
}
.bar {
    flex: 1;
    height: 14px;
    border: 1px solid #cfccf8;
    background: #226eb0;
}
.bar-value {
    position: relative;
    width: 34px;
    border: 2px solid #a6d9ff;
    border-radius: 3px;
    background: #fff;
    line-height: 18px;
    text-align: center;
}
.bar-value::before {
    content: '';
    position: absolute;
    left: -6px;
    top: 5px;
    border: 4px solid transparent;
    border-right-color: #a6d9ff;
    border-left: 0;
}

/* Chat bubble */
.chat {
    position: absolute;
    right: 26px;
    bottom: 12px;
    display: grid;
    place-items: center;
    width: 38px;
    height: 38px;
    border-radius: 50%;
    background: #b5dbff;
    box-shadow: 0 0 1px #dedaff;
}
.count {
    position: absolute;
    right: -5px;
    top: -2px;
    width: 18px;
    height: 18px;
    border-radius: 50%;
    background: #e2674c;
    color: #fff;
    font-size: 9px;
    line-height: 18px;
}

/* Window behind */
.behind {
    display: flex;
    align-items: flex-end;
    height: 21px;
    margin: -8px 20px 0 0;
    padding-right: 8px;
    overflow: hidden;
    flex: none;
    background: #b5b5ac;
    border-top: 9px solid #a5a2c0;
    border-bottom-right-radius: 8px;
    fill: #24244a;
}
.orb {
    margin-right: -33px;
}
.cell {
    display: flex;
    flex: 1;
    justify-content: center;
}
.ruled {
    background:
        linear-gradient(#c04a5c, #c04a5c) 6px 0 / 2px 100% no-repeat,
        linear-gradient(#cc6a48, #cc6a48) right 6px top 0 / 2px 100% no-repeat;
}
.tv {
    align-items: flex-end;
    color: #24244a;
    font-size: 19px;
    font-weight: 700;
    line-height: 12px;
}

/* Dock */
.dock {
    display: flex;
    justify-content: space-between;
    height: 36px;
    flex: none;
    margin: 1px 24px 3px 25px;
    padding: 5px 4px 0 5px;
    border-radius: 9px;
    background: linear-gradient(100deg, #6b6c51 62%, #6e6a50 82%, #85584a 85%, #85584a 87%, #6b6c51 90%, #6b6c51 94%, #8e8ba2 95%);
    z-index: 1;
}
.app {
    position: relative;
    width: 24px;
    height: 24px;
}
.app > svg {
    width: 100%;
    height: 100%;
}
.running::after {
    content: '';
    position: absolute;
    left: 11px;
    bottom: -6px;
    width: 3px;
    height: 3px;
    border-radius: 50%;
    background: #111;
}
.badge {
    position: absolute;
    right: -4px;
    top: -3px;
    min-width: 11px;
    height: 11px;
    border-radius: 6px;
    background: #e0424c;
    color: #fff;
    font-size: 6px;
    line-height: 11px;
    text-align: center;
}
.wide-badge {
    padding: 0 1px;
}
.calendar {
    border-radius: 5px;
    background: #fff;
    overflow: hidden;
    text-align: center;
}
.calendar span {
    display: block;
    background: #e8573f;
    color: #fff;
    font-size: 5px;
    line-height: 8px;
}
.calendar b {
    display: block;
    font-size: 13px;
    font-weight: 400;
    line-height: 15px;
}
.tv-app {
    display: flex;
    align-items: center;
    justify-content: center;
    border-radius: 5px;
    background: #14160c;
    color: #fff;
    font-size: 9px;
    font-weight: 600;
}
.tv-app > svg {
    width: 7px;
    height: 9px;
}
.dock-sep {
    width: 1px;
    height: 26px;
    margin: 0 4px;
    background: #55563f;
}
.minimized {
    width: 22px;
}

/* Desktop items */
.desk-label {
    position: absolute;
    right: 6px;
    top: 80px;
    color: #fff;
    font-size: 7px;
}
.desk-label.lower {
    right: 8px;
    top: 217px;
}
.desk-photo {
    position: absolute;
    right: 5px;
    bottom: 0;
}
.cursor {
    position: absolute;
    right: 15px;
    top: 220px;
    z-index: 2;
}
```
